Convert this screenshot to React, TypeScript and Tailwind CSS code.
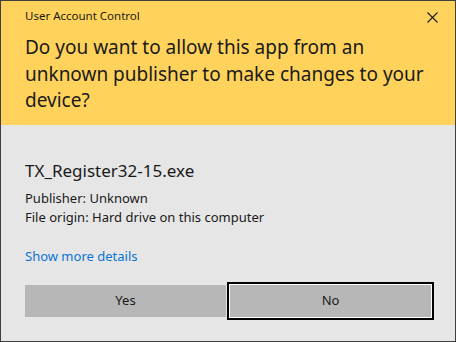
import React from "react";

export default function App() {
  const font = { fontFamily: '"Noto Sans", "Open Sans", sans-serif' };
  return (
    <div
      className="w-[456px] h-[342px] border border-[#3f3f3f] bg-[#e6e6e6] flex flex-col text-black"
      style={font}
    >
      <div className="h-[124px] bg-[#ffd35b] pl-[24px] pr-[17px] flex flex-col">
        <div className="flex items-start justify-between pt-[6px]">
          <div className="text-[11.5px] leading-[18px] text-[#1a1a1a]">User Account Control</div>
          <svg width="11" height="11" viewBox="0 0 11 11" className="mt-[5px]">
            <path d="M0.5 0.5 L10.5 10.5 M10.5 0.5 L0.5 10.5" stroke="#1a1a1a" strokeWidth="1.1" />
          </svg>
        </div>
        <div className="mt-[9px] pr-[7px] text-[19px] leading-[26.5px] text-[#1a1a1a]">
          Do you want to allow this app from an unknown publisher to make changes to your device?
        </div>
      </div>
      <div className="flex-1 px-[24px] flex flex-col">
        <div className="mt-[34px] text-[17px] leading-[24px] text-[#1a1a1a]">TX_Register32-15.exe</div>
        <div className="mt-[6px] text-[13px] leading-[19px] text-[#1a1a1a]">Publisher: Unknown</div>
        <div className="text-[13px] leading-[19px] text-[#1a1a1a]">File origin: Hard drive on this computer</div>
        <div className="mt-[20px] text-[13px] leading-[19px] text-[#0a74d4]">Show more details</div>
        <div className="mt-[19px] flex gap-[4px]">
          <button className="w-[201px] h-[32px] bg-[#b7b7b7] text-[13px] text-[#1a1a1a]">Yes</button>
          <button className="w-[201px] h-[32px] bg-[#b7b7b7] text-[13px] text-[#1a1a1a] shadow-[0_0_0_1px_#ffffff,0_0_0_3px_#000000]">
            No
          </button>
        </div>
      </div>
    </div>
  );
}
